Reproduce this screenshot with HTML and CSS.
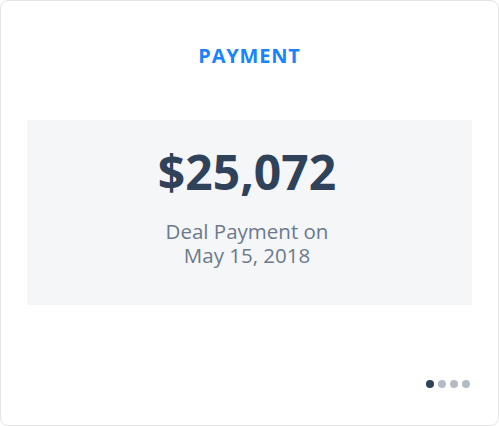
FILE: index.html
```html
<!DOCTYPE html>
<html>
<head>
<meta charset="utf-8">
<link rel="stylesheet" href="styles.css">
</head>
<body>
<div class="card">
  <div class="title">PAYMENT</div>
  <div class="panel">
    <div class="amount">$25,072</div>
    <div class="desc">Deal Payment on<br>May 15, 2018</div>
  </div>
  <div class="dots">
    <span class="dot active"></span>
    <span class="dot"></span>
    <span class="dot"></span>
    <span class="dot"></span>
  </div>
</div>
</body>
</html>
```
FILE: styles.css
```css
html, body {
  margin: 0;
  padding: 0;
  background: #ffffff;
}
.card {
  box-sizing: border-box;
  width: 499px;
  height: 426px;
  border: 1px solid #e4e4e4;
  border-radius: 8px;
  padding: 43px 26px 0 26px;
  display: flex;
  flex-direction: column;
  font-family: "Open Sans", sans-serif;
}
.title {
  text-align: center;
  font-size: 20px;
  line-height: 24px;
  font-weight: 700;
  letter-spacing: 0.8px;
  color: #1a84ff;
}
.panel {
  margin-top: 52px;
  height: 185px;
  box-sizing: border-box;
  padding: 22px 5px 0 0;
  background: #f5f6f8;
  text-align: center;
}
.amount {
  font-size: 48px;
  line-height: 60px;
  font-weight: 700;
  color: #2f4259;
}
.desc {
  margin-top: 17px;
  font-size: 20.5px;
  line-height: 24px;
  font-weight: 500;
  color: #6b7a8b;
}
.dots {
  margin-top: auto;
  margin-bottom: 37px;
  display: flex;
  justify-content: flex-end;
  gap: 4px;
  padding-right: 2px;
}
.dot {
  width: 8px;
  height: 8px;
  border-radius: 50%;
  background: #b3bbc6;
}
.dot.active {
  background: #2f4259;
}
```
